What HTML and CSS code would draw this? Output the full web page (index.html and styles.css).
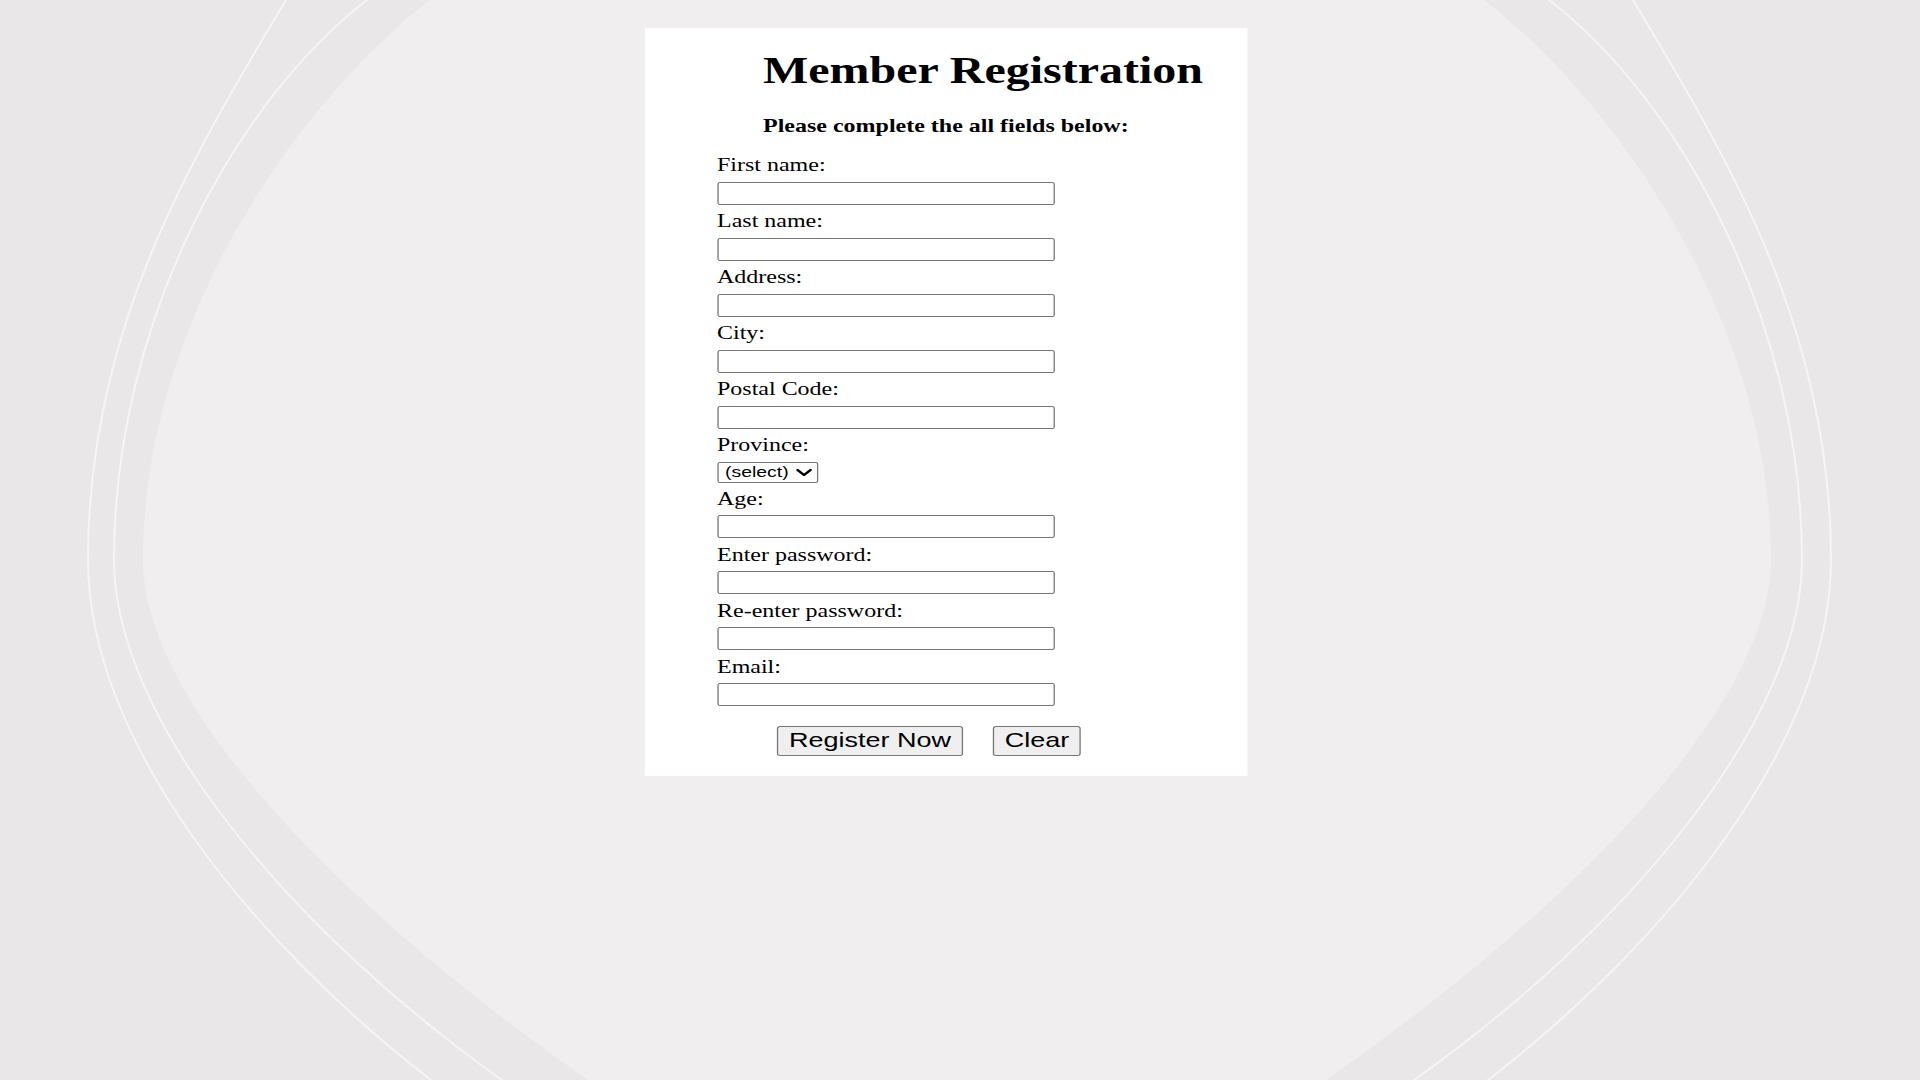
FILE: index.html
```html
<!DOCTYPE html>
<html lang="en">
<head>
<meta charset="utf-8">
<title>Member Registration</title>
<link rel="stylesheet" href="styles.css">
</head>
<body>
<div class="backdrop" aria-hidden="true">
  <svg class="backdrop-art" viewBox="0 0 1920 1080" width="1920" height="1080">
    <rect width="1920" height="1080" fill="#e9e7e8"/>
    <path d="M 482 -40 L 430 0 C 300 100 143 320 143 560 C 143 700 330 900 588 1080 L 888 1290 L 1026 1290 L 1326 1080 C 1584 900 1771 700 1771 560 C 1771 320 1614 100 1484 0 L 1432 -40 Z" fill="#f0eeef"/>
    <g fill="none" stroke="#f6f5f6" stroke-width="2">
      <path d="M 419 -40 L 367 0 C 237 100 114 320 114 560 C 114 720 290 930 502 1080 L 640 1180"/>
      <path d="M 1497 -40 L 1549 0 C 1679 100 1802 320 1802 560 C 1802 720 1626 930 1414 1080 L 1276 1180"/>
      <path d="M 310 -40 L 286 0 C 190 160 88 330 88 560 C 88 740 250 940 431 1080 L 560 1180"/>
      <path d="M 1609 -40 L 1633 0 C 1729 160 1831 330 1831 560 C 1831 740 1669 940 1488 1080 L 1359 1180"/>
    </g>
  </svg>
</div>
<main class="page">
  <section class="card">
    <h1 class="title">Member Registration</h1>
    <p class="subtitle">Please complete the all fields below:</p>
    <form class="form">
      <label class="field"><span class="label">First name:</span><input class="input" type="text" name="first"></label>
      <label class="field"><span class="label">Last name:</span><input class="input" type="text" name="last"></label>
      <label class="field"><span class="label">Address:</span><input class="input" type="text" name="address"></label>
      <label class="field"><span class="label">City:</span><input class="input" type="text" name="city"></label>
      <label class="field"><span class="label">Postal Code:</span><input class="input" type="text" name="postal"></label>
      <label class="field"><span class="label">Province:</span>
        <select class="select" name="province">
          <option>(select)</option>
          <option>Alberta</option>
          <option>British Columbia</option>
          <option>Manitoba</option>
          <option>New Brunswick</option>
          <option>Newfoundland and Labrador</option>
          <option>Nova Scotia</option>
          <option>Ontario</option>
          <option>Prince Edward Island</option>
          <option>Quebec</option>
          <option>Saskatchewan</option>
        </select>
      </label>
      <label class="field"><span class="label">Age:</span><input class="input" type="text" name="age"></label>
      <label class="field"><span class="label">Enter password:</span><input class="input" type="password" name="pw"></label>
      <label class="field"><span class="label">Re-enter password:</span><input class="input" type="password" name="pw2"></label>
      <label class="field"><span class="label">Email:</span><input class="input" type="text" name="email"></label>
      <div class="actions">
        <button type="submit" class="btn btn-register">Register Now</button>
        <button type="reset" class="btn btn-clear">Clear</button>
      </div>
    </form>
  </section>
</main>
</body>
</html>
```
FILE: styles.css
```css
html, body {
  margin: 0;
  padding: 0;
}

body {
  background: #e9e7e8;
  font-family: "Liberation Serif", "Times New Roman", serif;
  color: #000;
  min-height: 1080px;
}

.backdrop {
  position: fixed;
  inset: 0;
  z-index: 0;
  overflow: hidden;
}

.backdrop-art {
  display: block;
}

.page {
  position: relative;
  z-index: 1;
  padding: 28px 0 0 645px;
}

/* The screenshot is stretched horizontally; the card is laid out at its
   natural proportions and widened with scaleX. */
.card {
  width: 466.4px;
  box-sizing: border-box;
  background: #fff;
  padding: 20.5px 0 20px;
  transform: scaleX(1.293);
  transform-origin: 0 0;
}

.title {
  margin: 0;
  padding-left: 91.3px;
  font-size: 37.1px;
  line-height: 44px;
  font-weight: bold;
}

.subtitle {
  margin: 22.2px 0 0;
  padding-left: 91.3px;
  font-size: 18.56px;
  line-height: 22px;
  font-weight: bold;
}

.form {
  margin: 17.7px 0 0;
  padding-left: 55.7px;
}

.field {
  display: flex;
  flex-direction: column;
  align-items: flex-start;
}

.label {
  font-size: 18.56px;
  line-height: 22px;
}

.input {
  box-sizing: border-box;
  width: 261.4px;
  height: 23.3px;
  margin: 5.3px 0 5.4px;
  padding: 0 2px;
  border: 1px solid #767676;
  border-radius: 2px;
  background: #fff;
  font: 15px "Liberation Sans", Arial, sans-serif;
}

.select {
  appearance: none;
  -webkit-appearance: none;
  box-sizing: border-box;
  width: 78.1px;
  height: 21.3px;
  margin: 5.3px 0 4.7px;
  padding: 0 0 1px 5.2px;
  border: 1px solid #767676;
  border-radius: 2px;
  color: #000;
  font: 15px/17px "Liberation Sans", Arial, sans-serif;
  background: #fff url("data:image/svg+xml,%3Csvg xmlns='http://www.w3.org/2000/svg' width='14' height='9' viewBox='0 0 14 9'%3E%3Cpath d='M2 2 L7 7 L12 2' fill='none' stroke='%23000' stroke-width='2.2' stroke-linecap='round' stroke-linejoin='round'/%3E%3C/svg%3E") no-repeat right 2.3px center / 14px 9px;
}

.actions {
  display: flex;
  gap: 23.2px;
  margin-top: 14.3px;
  padding-left: 46.4px;
}

.btn {
  box-sizing: border-box;
  height: 30px;
  padding: 0 0 2px;
  border: 1px solid #767676;
  border-radius: 2.5px;
  background: #efefef;
  color: #000;
  font: 20.9px/24px "Liberation Sans", Arial, sans-serif;
  text-align: center;
}

.btn-register {
  width: 143.9px;
}

.btn-clear {
  width: 68px;
}
```
